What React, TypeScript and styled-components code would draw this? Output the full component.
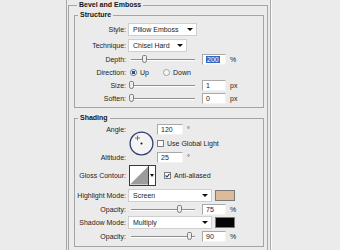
import React from 'react';
import styled, { createGlobalStyle } from 'styled-components';

const GlobalStyle = createGlobalStyle`
  html, body { margin: 0; padding: 0; }
  body {
    background: #ebebeb;
    font-family: "Liberation Sans", Arial, sans-serif;
    font-size: 7px;
    color: #1c1c1c;
  }
`;

const Window = styled.div`
  display: flex;
  width: 340px;
  height: 250px;
  overflow: hidden;
  background: #ebebeb;
`;

const SidePanel = styled.div`
  width: 66px;
  flex: none;
  border-right: 1px solid #a8a8a8;
`;

const Main = styled.div`
  width: 203px;
  flex: none;
  box-sizing: border-box;
  padding: 0 2px 0 1px;
`;

const RightPanel = styled.div`
  flex: 1;
  border-left: 1px solid #a8a8a8;
  box-shadow: inset 1px 0 0 #fafafa;
`;

const Group = styled.fieldset<{ $outer?: boolean; $mt?: number }>`
  margin: ${(p) => p.$mt ?? 0}px 0 0 0;
  min-width: 0;
  border: 1px solid #a4a4a4;
  padding: ${(p) => (p.$outer ? '0 3px 0 5px' : '0 0 3px 0')};
  height: ${(p) => (p.$outer ? '270px' : 'auto')};
  box-sizing: border-box;
`;

const Legend = styled.legend`
  font-weight: bold;
  line-height: 10px;
  height: 10px;
  padding: 0 2px;
  margin-left: 3px;
  color: #151515;
`;

const Rows = styled.div`
  display: flex;
  flex-direction: column;
`;

const Row = styled.div<{ $h: number; $mt?: number }>`
  display: flex;
  align-items: center;
  height: ${(p) => p.$h}px;
  margin-top: ${(p) => p.$mt ?? 0}px;
`;

const Label = styled.span`
  width: 53px;
  flex: none;
  box-sizing: border-box;
  padding-right: 2px;
  text-align: right;
  white-space: nowrap;
`;

const Controls = styled.div`
  display: flex;
  align-items: center;
`;

const Select = styled.div<{ $w: number }>`
  width: ${(p) => p.$w}px;
  height: 13px;
  box-sizing: border-box;
  background: #fff;
  border: 1px solid #cfcfcf;
  display: flex;
  align-items: center;
  justify-content: space-between;
  padding: 0 3px 0 4px;
`;

const Arrow = styled.span`
  width: 0;
  height: 0;
  border-left: 3px solid transparent;
  border-right: 3px solid transparent;
  border-top: 3px solid #111;
`;

const Track = styled.div`
  position: relative;
  width: 64px;
  height: 9px;
  margin: 0 7px 0 3px;
  &::before {
    content: '';
    position: absolute;
    left: 0;
    right: 0;
    top: 4px;
    height: 1px;
    background: #8e8e8e;
    box-shadow: 0 1px 0 #fff;
  }
`;

const Thumb = styled.div`
  position: absolute;
  top: 0;
  width: 5px;
  height: 8px;
  box-sizing: border-box;
  border: 1px solid #7c7c7c;
  border-radius: 2px 2px 3px 3px;
  background: #ededed;
`;

const NumBox = styled.div<{ $w: number }>`
  width: ${(p) => p.$w}px;
  height: 11px;
  box-sizing: border-box;
  background: #fff;
  border: 1px solid;
  border-color: #a9a9a9 #f2f2f2 #f2f2f2 #a9a9a9;
  padding-left: 3px;
  display: flex;
  align-items: center;
`;

const Selected = styled.span`
  background: #3369c4;
  color: #fff;
  padding: 0 1px;
`;

const Unit = styled.span`
  margin-left: 4px;
`;

const Radio = styled.span<{ $on?: boolean }>`
  width: 7px;
  height: 7px;
  box-sizing: border-box;
  border-radius: 50%;
  border: 1px solid ${(p) => (p.$on ? '#5a6a8a' : '#a0a0a0')};
  background: ${(p) => (p.$on ? 'radial-gradient(circle, #1f4fa8 0 1.6px, #fff 2px)' : '#f7f7f7')};
  margin-right: 3px;
`;

const Choice = styled.span`
  display: flex;
  align-items: center;
  margin-right: 14px;
  &:first-child { margin-left: 2px; }
`;

const Check = styled.span`
  width: 7px;
  height: 7px;
  box-sizing: border-box;
  border: 1px solid #7d7d7d;
  background: #fafafa;
  display: flex;
  align-items: center;
  justify-content: center;
`;

const AngleGrid = styled.div`
  display: grid;
  grid-template-columns: 53px 27px auto;
  grid-template-rows: 12px 16px 12px;
  align-items: center;
`;

const AngleDial = styled.svg`
  grid-column: 2;
  grid-row: 1 / 4;
  margin-left: 1px;
`;

const Cell = styled.div<{ $row: number }>`
  grid-column: 3;
  grid-row: ${(p) => p.$row};
  display: flex;
  align-items: center;
  padding-left: 2px;
`;

const GridLabel = styled(Label)<{ $row: number }>`
  grid-column: 1;
  grid-row: ${(p) => p.$row};
`;

const CheckText = styled.span`
  margin-left: 3px;
`;

const ContourBox = styled.div`
  display: flex;
  width: 27px;
  height: 21px;
  box-sizing: border-box;
  border: 1px solid #3a3a3a;
  margin-left: 1px;
  background: #fff;
`;

const ContourDrop = styled.div`
  width: 6px;
  border-left: 1px solid #3a3a3a;
  display: flex;
  align-items: center;
  justify-content: center;
`;

const SmallArrow = styled(Arrow)`
  border-left-width: 2px;
  border-right-width: 2px;
`;

const Swatch = styled.div<{ $color: string }>`
  width: 20px;
  height: 11px;
  box-sizing: border-box;
  margin-left: 3px;
  border: 1px solid #7a7a7a;
  background: ${(p) => p.$color};
`;

const Tick = () => (
  <svg width="5" height="5" viewBox="0 0 5 5">
    <path d="M0.5 2.5 L2 4 L4.5 0.8" fill="none" stroke="#2a3f7a" strokeWidth="1.1" />
  </svg>
);

type SliderProps = { value: number; max: number; unit: string; selected?: boolean };

const SliderField = ({ value, max, unit, selected }: SliderProps) => (
  <Controls>
    <Track>
      <Thumb style={{ left: `calc(${(value / max) * 100}% - 2px)` }} />
    </Track>
    <NumBox $w={24}>{selected ? <Selected>{value}</Selected> : value}</NumBox>
    <Unit>{unit}</Unit>
  </Controls>
);

const App = () => {
  return (
    <>
      <GlobalStyle />
      <Window>
        <SidePanel />
        <Main>
          <Group $outer>
            <Legend>Bevel and Emboss</Legend>
            <Group>
              <Legend>Structure</Legend>
              <Rows>
                <Row $h={14} $mt={2}>
                  <Label>Style:</Label>
                  <Select $w={69}>Pillow Emboss<Arrow /></Select>
                </Row>
                <Row $h={14} $mt={2}>
                  <Label>Technique:</Label>
                  <Select $w={59}>Chisel Hard<Arrow /></Select>
                </Row>
                <Row $h={14}>
                  <Label>Depth:</Label>
                  <SliderField value={200} max={1000} unit="%" selected />
                </Row>
                <Row $h={13}>
                  <Label>Direction:</Label>
                  <Controls>
                    <Choice><Radio $on />Up</Choice>
                    <Choice><Radio />Down</Choice>
                  </Controls>
                </Row>
                <Row $h={13}>
                  <Label>Size:</Label>
                  <SliderField value={1} max={250} unit="px" />
                </Row>
                <Row $h={12}>
                  <Label>Soften:</Label>
                  <SliderField value={0} max={16} unit="px" />
                </Row>
              </Rows>
            </Group>
            <Group $mt={5}>
              <Legend>Shading</Legend>
              <Rows>
                <AngleGrid>
                  <GridLabel $row={1}>Angle:</GridLabel>
                  <GridLabel $row={3}>Altitude:</GridLabel>
                  <AngleDial width="25" height="25" viewBox="0 0 25 25">
                    <circle cx="12.5" cy="12.5" r="11.4" fill="#f4f4f4" stroke="#2e3d72" strokeWidth="1.3" />
                    <circle cx="12.5" cy="12.5" r="1" fill="#111" />
                    <path d="M8.5 4.5 V9.5 M6 7 H11" stroke="#777" strokeWidth="1" />
                  </AngleDial>
                  <Cell $row={1}>
                    <NumBox $w={26}>120</NumBox>
                    <Unit>°</Unit>
                  </Cell>
                  <Cell $row={2}>
                    <Check />
                    <CheckText>Use Global Light</CheckText>
                  </Cell>
                  <Cell $row={3}>
                    <NumBox $w={26}>25</NumBox>
                    <Unit>°</Unit>
                  </Cell>
                </AngleGrid>
                <Row $h={22} $mt={1}>
                  <Label>Gloss Contour:</Label>
                  <ContourBox>
                    <svg width="19" height="19" viewBox="0 0 19 19">
                      <polygon points="0,19 19,0 19,19" fill="#9c9c9c" />
                    </svg>
                    <ContourDrop><SmallArrow /></ContourDrop>
                  </ContourBox>
                  <Controls style={{ marginLeft: 8 }}>
                    <Check><Tick /></Check>
                    <CheckText>Anti-aliased</CheckText>
                  </Controls>
                </Row>
                <Row $h={13} $mt={3}>
                  <Label>Highlight Mode:</Label>
                  <Select $w={84}>Screen<Arrow /></Select>
                  <Swatch $color="#dbbb98" />
                </Row>
                <Row $h={14}>
                  <Label>Opacity:</Label>
                  <SliderField value={75} max={100} unit="%" />
                </Row>
                <Row $h={13}>
                  <Label>Shadow Mode:</Label>
                  <Select $w={84}>Multiply<Arrow /></Select>
                  <Swatch $color="#050505" />
                </Row>
                <Row $h={14}>
                  <Label>Opacity:</Label>
                  <SliderField value={90} max={100} unit="%" />
                </Row>
              </Rows>
            </Group>
          </Group>
        </Main>
        <RightPanel />
      </Window>
    </>
  );
};

export default App;
